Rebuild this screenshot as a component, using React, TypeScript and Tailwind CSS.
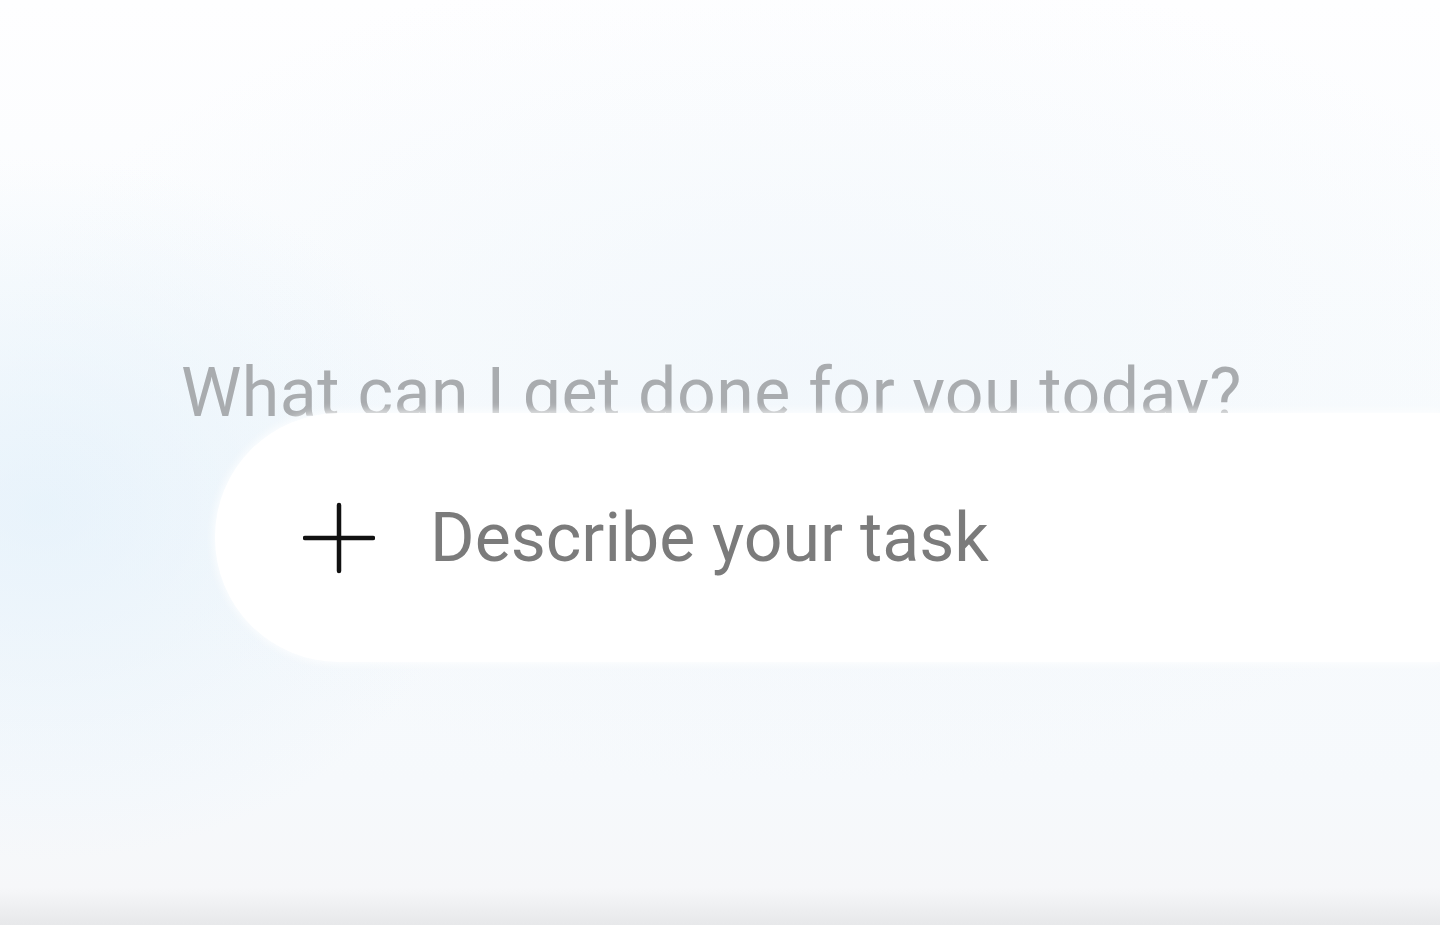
export default function App() {
  return (
    <div className="relative h-[925px] w-full overflow-hidden bg-[linear-gradient(180deg,#fefeff_0%,#f8fbfd_45%,#f6f9fc_85%,#f6f7f9_96%,#e7e8ea_100%)] font-['Roboto',sans-serif]">
      {/* soft blue haze behind the prompt */}
      <div className="pointer-events-none absolute inset-0 bg-[radial-gradient(ellipse_30%_38%_at_3%_55%,rgba(222,238,250,0.6)_0%,rgba(222,238,250,0)_100%),radial-gradient(ellipse_55%_45%_at_55%_40%,rgba(236,244,251,0.5)_0%,rgba(236,244,251,0)_100%)]" />

      <div className="relative flex flex-col pt-[359px]">
        <h1 className="ml-[181px] text-[68px] leading-[68px] tracking-[0.5px] text-[#a9acaf] whitespace-nowrap">
          What can I get done for you today?
        </h1>

        {/* task input */}
        <div className="relative -mt-[14px] ml-[215px] flex h-[249px] items-center rounded-l-[124px] bg-white pl-[88px] shadow-[0_0_8px_2px_rgba(255,255,255,0.8)]">
          <svg width="72" height="72" viewBox="0 0 72 72" className="shrink-0">
            <path d="M36 3v66M2 36h68" stroke="#111" strokeWidth="4.5" strokeLinecap="round" fill="none" />
          </svg>
          <span className="ml-[55px] text-[68px] leading-none text-[#7b7b7b] whitespace-nowrap">Describe your task</span>
        </div>
      </div>
    </div>
  );
}
